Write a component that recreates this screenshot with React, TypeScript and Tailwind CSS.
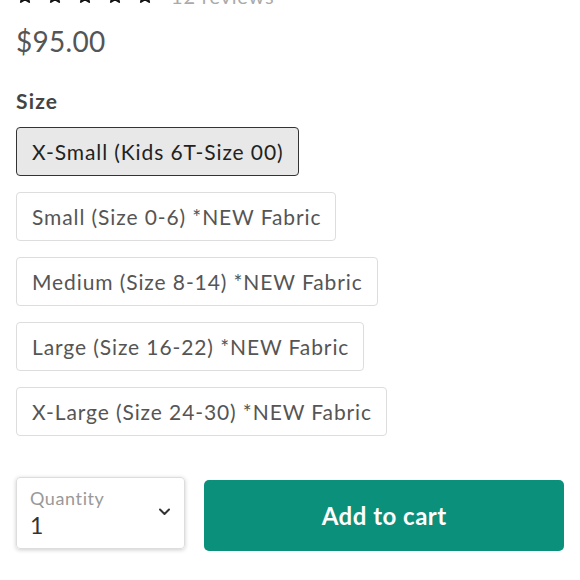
import React from "react";

const Star = () => (
  <svg width="16" height="16" viewBox="0 0 24 24" className="shrink-0">
    <path d="M12 2l2.9 6.9 7.1.6-5.4 4.7 1.7 7-6.3-3.9-6.3 3.9 1.7-7L2 9.5l7.1-.6z" fill="none" stroke="#111" strokeWidth="2.6" strokeLinejoin="round" />
  </svg>
);

const sizes = [
  "X-Small (Kids 6T-Size 00)",
  "Small (Size 0-6) *NEW Fabric",
  "Medium (Size 8-14) *NEW Fabric",
  "Large (Size 16-22) *NEW Fabric",
  "X-Large (Size 24-30) *NEW Fabric",
];

export default function App() {
  return (
    <div className="w-[580px] h-[580px] overflow-hidden bg-white" style={{ fontFamily: "Lato, 'Noto Sans', sans-serif" }}>
      <div className="px-4">
        <div className="flex items-center gap-[14px] mt-[-12px] h-[16px] pl-[1px]">
          <Star /><Star /><Star /><Star /><Star />
          <span className="ml-[4px] text-[20px] leading-[16px] tracking-[0.8px] text-[#aaa]">12 reviews</span>
        </div>
        <div className="mt-[20px] text-[28px] leading-[34px] tracking-[0.3px] text-[#555]">$95.00</div>
        <div className="mt-[31px] text-[21px] leading-[24px] tracking-[1.2px] font-bold text-[#444]">Size</div>
        <div className="mt-[14px] flex flex-col items-start gap-[16px]">
          {sizes.map((s, i) => (
            <div
              key={s}
              className={
                i === 0
                  ? "h-[49px] flex items-center pl-[15px] pr-[14px] rounded-[4px] border-[1.5px] border-[#333] bg-[#e8e8e8] text-[21px] tracking-[0.9px] text-[#222]"
                  : "h-[49px] flex items-center pl-[15px] pr-[14px] rounded-[4px] border border-[#ddd] bg-white text-[21px] tracking-[0.9px] text-[#555]"
              }
            >
              {s}
            </div>
          ))}
        </div>
        <div className="mt-[41px] flex items-start gap-[19px]">
          <div className="w-[170px] h-[72px] rounded-[4px] border border-[#ddd] shadow-[0_1px_4px_rgba(0,0,0,0.2)] flex items-center pl-[13px] pr-[13px]">
            <div className="flex-1 flex flex-col">
              <span className="text-[18px] leading-[22px] tracking-[0.6px] text-[#999]">Quantity</span>
              <span className="mt-[2px] text-[23px] leading-[28px] text-[#333]">1</span>
            </div>
            <svg width="13" height="8" viewBox="0 0 13 8" className="mb-[3px]">
              <path d="M2 1.5l4.5 4.5 4.5-4.5" fill="none" stroke="#333" strokeWidth="2" strokeLinecap="round" strokeLinejoin="round" />
            </svg>
          </div>
          <button className="mt-[3px] w-[361px] h-[71px] rounded-[5px] bg-[#0b907c] text-white text-[24px] tracking-[0.5px] font-bold">
            Add to cart
          </button>
        </div>
      </div>
    </div>
  );
}
